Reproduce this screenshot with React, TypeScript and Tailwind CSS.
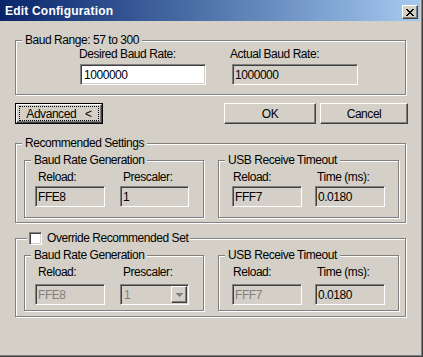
import React from "react";

const etched =
  "relative border border-[#808080] shadow-[inset_1px_1px_0_#fff,1px_1px_0_#fff]";
const sunken =
  "border border-t-[#808080] border-l-[#808080] border-b-white border-r-white shadow-[inset_1px_1px_0_#404040,inset_-1px_-1px_0_#d4d0c8]";
const raised =
  "border border-t-white border-l-white border-b-[#404040] border-r-[#404040] bg-[#d4d0c8] shadow-[inset_-1px_-1px_0_#808080]";

function Legend({ children, className = "" }: { children: React.ReactNode; className?: string }) {
  return (
    <span
      className={`absolute top-[-8px] left-[6px] h-[14px] px-[3px] bg-[#d4d0c8] leading-[14px] whitespace-nowrap ${className}`}
    >
      {children}
    </span>
  );
}

function Field({
  children,
  className = "",
}: {
  children: React.ReactNode;
  className?: string;
}) {
  return (
    <div className={`${sunken} flex items-center pl-[2px] leading-[14px] ${className}`}>
      {children}
    </div>
  );
}

function CloseGlyph() {
  // classic 8x7 "X"
  const rows = ["XX....XX", ".XX..XX.", "..XXXX..", "...XX...", "..XXXX..", ".XX..XX.", "XX....XX"];
  return (
    <svg width="8" height="7" viewBox="0 0 8 7" shapeRendering="crispEdges">
      {rows.map((r, y) =>
        r.split("").map((c, x) =>
          c === "X" ? <rect key={`${x}-${y}`} x={x} y={y} width="1" height="1" fill="#000" /> : null
        )
      )}
    </svg>
  );
}

function ArrowGlyph({ color }: { color: string }) {
  return (
    <svg width="7" height="4" viewBox="0 0 7 4" shapeRendering="crispEdges">
      <rect x="0" y="0" width="7" height="1" fill={color} />
      <rect x="1" y="1" width="5" height="1" fill={color} />
      <rect x="2" y="2" width="3" height="1" fill={color} />
      <rect x="3" y="3" width="1" height="1" fill={color} />
    </svg>
  );
}

export default function App() {
  return (
    <div className="w-[423px] h-[357px] bg-[#d4d0c8] border-r border-b border-[#404040] text-[12px] tracking-[-0.45px] text-black [font-family:'Liberation_Sans',Arial,sans-serif] select-none overflow-hidden">
      <div className="h-full border-r border-b border-[#808080] pr-[1px] pb-[1px]">
        {/* title bar */}
        <div className="h-[21px] flex items-start justify-between bg-linear-to-r from-[#0a246a] to-[#a6caf0] pl-[5px] pr-[2px]">
          <span className="text-white font-bold text-[12px] tracking-[0.2px] leading-[21px] pt-[1px]">
            Edit Configuration
          </span>
          <div className={`${raised} mt-[5px] w-[16px] h-[14px] flex items-center justify-center`}>
            <CloseGlyph />
          </div>
        </div>

        {/* baud range */}
        <div className={`${etched} ml-[15px] mt-[19px] w-[391px] h-[55px]`}>
          <Legend>Baud Range: 57 to 300</Legend>
          <div className="flex pt-[6px] pl-[64px]">
            <div className="flex flex-col">
              <span className="leading-[14px] -ml-[1px]">Desired Baud Rate:</span>
              <Field className="mt-[3px] w-[126px] h-[21px] bg-white pl-[3px]">1000000</Field>
            </div>
            <div className="flex flex-col ml-[26px]">
              <span className="leading-[14px] -ml-[2px]">Actual Baud Rate:</span>
              <Field className="mt-[3px] w-[126px] h-[21px]">1000000</Field>
            </div>
          </div>
        </div>

        {/* buttons */}
        <div className="flex mt-[8px] h-[21px]">
          <div className="ml-[15px] w-[88px] h-[21px] border border-black">
            <div className={`${raised} h-full px-[2px] py-[1px]`}>
              <div className="h-full border border-dotted border-black flex items-center justify-center leading-[14px]">
                Advanced<span className="ml-[9px]">&lt;</span>
              </div>
            </div>
          </div>
          <div className={`${raised} ml-[121px] w-[92px] h-[21px] flex items-center justify-center leading-[14px]`}>
            OK
          </div>
          <div className={`${raised} ml-[4px] w-[88px] h-[21px] flex items-center justify-center leading-[14px]`}>
            Cancel
          </div>
        </div>

        {/* recommended settings */}
        <div className={`${etched} ml-[15px] mt-[19px] w-[391px] h-[80px]`}>
          <Legend>Recommended Settings</Legend>
          <div className="flex pt-[16px] pl-[8px]">
            <div className={`${etched} w-[180px] h-[58px]`}>
              <Legend>Baud Rate Generation</Legend>
              <div className="flex pt-[9px] pl-[10px]">
                <div className="flex flex-col">
                  <span className="leading-[14px] pl-[3px]">Reload:</span>
                  <Field className="mt-[2px] w-[70px] h-[21px]">FFE8</Field>
                </div>
                <div className="flex flex-col ml-[15px]">
                  <span className="leading-[14px] pl-[3px]">Prescaler:</span>
                  <Field className="mt-[2px] w-[69px] h-[21px]">1</Field>
                </div>
              </div>
            </div>
            <div className={`${etched} ml-[14px] w-[181px] h-[58px]`}>
              <Legend>USB Receive Timeout</Legend>
              <div className="flex pt-[9px] pl-[13px]">
                <div className="flex flex-col">
                  <span className="leading-[14px] pl-[1px]">Reload:</span>
                  <Field className="mt-[2px] w-[70px] h-[21px]">FFF7</Field>
                </div>
                <div className="flex flex-col ml-[13px]">
                  <span className="leading-[14px] pl-[2px]">Time (ms):</span>
                  <Field className="mt-[2px] w-[70px] h-[21px]">0.0180</Field>
                </div>
              </div>
            </div>
          </div>
        </div>

        {/* override */}
        <div className={`${etched} ml-[15px] mt-[15px] w-[391px] h-[79px]`}>
          <span className="absolute top-[-8px] left-[11px] h-[14px] px-[2px] bg-[#d4d0c8] flex items-center whitespace-nowrap">
            <span className={`${sunken} w-[13px] h-[13px] bg-white`} />
            <span className="ml-[5px] leading-[14px]">Override Recommended Set</span>
          </span>
          <div className="flex pt-[16px] pl-[8px]">
            <div className={`${etched} w-[180px] h-[56px]`}>
              <Legend>Baud Rate Generation</Legend>
              <div className="flex pt-[9px] pl-[10px]">
                <div className="flex flex-col">
                  <span className="leading-[14px] pl-[3px]">Reload:</span>
                  <Field className="mt-[5px] w-[70px] h-[21px] text-[#808080]">FFE8</Field>
                </div>
                <div className="flex flex-col ml-[15px]">
                  <span className="leading-[14px] pl-[3px]">Prescaler:</span>
                  <div className={`${sunken} mt-[5px] w-[69px] h-[21px] p-[1px] flex items-stretch`}>
                    <span className="flex-1 pl-[2px] flex items-center leading-[14px] text-[#808080]">1</span>
                    <span className={`${raised} w-[16px] flex items-center justify-center`}>
                      <ArrowGlyph color="#808080" />
                    </span>
                  </div>
                </div>
              </div>
            </div>
            <div className={`${etched} ml-[14px] w-[181px] h-[56px]`}>
              <Legend>USB Receive Timeout</Legend>
              <div className="flex pt-[9px] pl-[13px]">
                <div className="flex flex-col">
                  <span className="leading-[14px] pl-[1px]">Reload:</span>
                  <Field className="mt-[5px] w-[70px] h-[21px] text-[#808080]">FFF7</Field>
                </div>
                <div className="flex flex-col ml-[13px]">
                  <span className="leading-[14px] pl-[2px]">Time (ms):</span>
                  <Field className="mt-[5px] w-[70px] h-[21px]">0.0180</Field>
                </div>
              </div>
            </div>
          </div>
        </div>
      </div>
    </div>
  );
}
